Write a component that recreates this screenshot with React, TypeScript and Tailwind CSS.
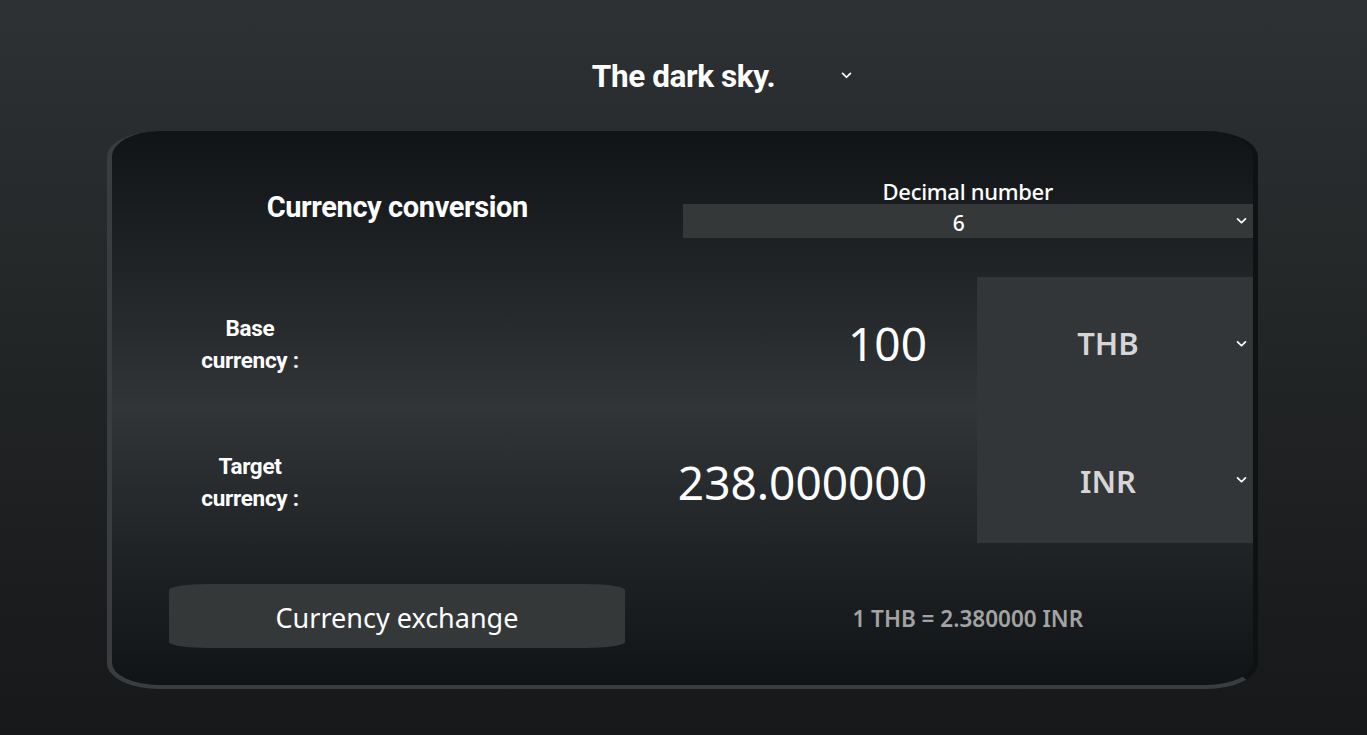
import React from 'react';

const Chevron = ({ className = '' }: { className?: string }) => (
  <svg viewBox="0 0 12 8" className={`w-[11px] h-[7px] ${className}`} fill="none">
    <polyline points="1.5,1.5 6,6 10.5,1.5" stroke="currentColor" strokeWidth="2" strokeLinecap="round" strokeLinejoin="round" />
  </svg>
);

const CurrencyRow = ({ label1, label2, value, code, shift }: { label1: string; label2: string; value: string; code: string; shift?: boolean }) => (
  <>
    <div className={`flex flex-col items-center justify-center font-['Roboto',sans-serif] font-bold text-[22.5px] leading-[32px] tracking-[-0.3px] text-white ${shift ? 'pt-[10px]' : ''}`}>
      <span>{label1}</span>
      <span>{label2}</span>
    </div>
    <div className={`flex items-center justify-end pr-[50px] font-['Noto_Sans',sans-serif] text-[46px] text-white ${shift ? 'pt-[12px]' : ''}`}>
      {value}
    </div>
    <div className={`relative flex items-center justify-center pr-[14px] bg-[#333638] font-['Noto_Sans',sans-serif] font-semibold text-[31px] text-[#d6d6d6] ${shift ? 'pt-[10px]' : ''}`}>
      {code}
      <Chevron className={`absolute right-[6px] -translate-y-1/2 text-white ${shift ? 'top-[53%]' : 'top-1/2'}`} />
    </div>
  </>
);

export default function App() {
  return (
    <div className="min-h-[735px] w-full bg-gradient-to-b from-[#2e3133] to-[#161819] pt-[52px]">
      {/* header select */}
      <div className="relative mx-auto w-[344px] h-[50px] flex items-center justify-center">
        <span className="font-['Roboto',sans-serif] font-bold text-[31.5px] tracking-[-0.4px] text-white">The dark sky.</span>
        <Chevron className="absolute right-[4px] top-[20px] text-white" />
      </div>

      {/* card */}
      <div className="ml-[107px] mt-[29px] w-[1151px] h-[558px] rounded-[52px/26px] border-l-[5px] border-b-[4px] border-r-[5px] border-l-[#3a3d3f] border-b-[#3a3d3f] border-r-[#0f1213] bg-gradient-to-b from-[#111416] via-[#323537] to-[#111416] flex flex-col">
        {/* top row */}
        <div className="grid grid-cols-2 h-[146px]">
          <div className="flex items-center justify-center pt-[8px] font-['Roboto',sans-serif] font-bold text-[29px] tracking-[-0.4px] text-white">
            Currency conversion
          </div>
          <div className="flex flex-col justify-end pb-[39px]">
            <div className="text-center font-['Noto_Sans',sans-serif] font-medium text-[22px] leading-[26px] tracking-[-0.3px] text-white">
              Decimal number
            </div>
            <div className="relative h-[34px] bg-[#353839] flex items-center justify-center pt-[5px] font-['Noto_Sans',sans-serif] font-medium text-[21px] text-white pr-[18px]">
              6
              <Chevron className="absolute right-[6px] top-1/2 -translate-y-1/2 text-white" />
            </div>
          </div>
        </div>

        {/* currency rows */}
        <div className="grid grid-cols-[276px_1fr_276px] grid-rows-[133px_133px]">
          <CurrencyRow label1="Base" label2="currency :" value="100" code="THB" />
          <CurrencyRow label1="Target" label2="currency :" value="238.000000" code="INR" shift />
        </div>

        {/* bottom row */}
        <div className="grid grid-cols-2 mt-[41px]">
          <div className="pl-[57px] pr-[57px]">
            <button className="w-[456px] h-[64px] pt-[5px] rounded-[40px/6px] bg-[#353839] font-['Noto_Sans',sans-serif] text-[27px] text-white">
              Currency exchange
            </button>
          </div>
          <div className="flex items-center justify-center pt-[6px] font-['Noto_Sans',sans-serif] font-semibold text-[22.5px] text-[#a3a3a3]">
            1 THB = 2.380000 INR
          </div>
        </div>
      </div>
    </div>
  );
}
